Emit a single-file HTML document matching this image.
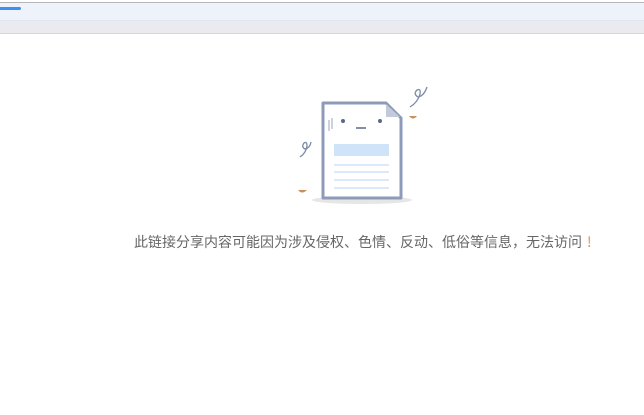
<!DOCTYPE html>
<html><head><meta charset="utf-8"><style>
html,body{margin:0;padding:0;width:644px;height:415px;background:#fff;overflow:hidden;position:relative}
.a{position:absolute}
</style></head><body>
<div class="a" style="left:0;top:2px;width:644px;height:1px;background:#b5b5ba"></div>
<div class="a" style="left:0;top:3px;width:644px;height:17px;background:#eef3fb"></div>
<div class="a" style="left:0;top:7px;width:21px;height:3px;background:#3d8ef5;border-radius:0 2px 2px 0"></div>
<div class="a" style="left:0;top:20px;width:644px;height:13px;background:#ebeaef;border-top:1px solid #dde6f2"></div>
<div class="a" style="left:0;top:33px;width:644px;height:1px;background:#c8d9f0"></div>
<svg class="a" style="left:290px;top:80px" width="150" height="130" viewBox="0 0 150 130">
<ellipse cx="72" cy="120" rx="50" ry="4" fill="#e6e6e6"/>
<path d="M33 23 L96 23 L111 38 L111 118 L33 118 Z" fill="#fff" stroke="#8e9bb8" stroke-width="3" stroke-linejoin="round"/>
<path d="M96 24 L96 37 L110 37 Z" fill="#c2cad9"/>
<line x1="39" y1="40" x2="39" y2="51" stroke="#9aa6c0" stroke-width="1"/>
<line x1="42" y1="38" x2="42" y2="49" stroke="#9aa6c0" stroke-width="1"/>
<circle cx="53" cy="41" r="2" fill="#5a6888"/>
<circle cx="90" cy="41" r="2" fill="#5a6888"/>
<line x1="66" y1="48" x2="76" y2="48" stroke="#5a6888" stroke-width="1.5"/>
<rect x="44" y="64" width="55" height="12" fill="#cfe3f9"/>
<g stroke="#c6dcf4" stroke-width="1.3"><line x1="44" y1="85" x2="99" y2="85"/><line x1="44" y1="92" x2="99" y2="92"/><line x1="44" y1="100" x2="99" y2="100"/><line x1="44" y1="108" x2="99" y2="108"/></g>
<path d="M120 27 Q128 22 130 14 Q131 8 127 10 Q123 14 128 17 Q134 16 137 7" fill="none" stroke="#7d8aa8" stroke-width="1.3"/>
<path d="M10 77 Q16 73 17 66 Q17 61 14 63 Q11 67 15 69 Q20 68 21 62" fill="none" stroke="#7d8aa8" stroke-width="1.3"/>
<path d="M119 36 Q123 41 127 36 Z" fill="#c9905a"/>
<path d="M8 110 Q12 115 17 110 Z" fill="#c9905a"/>
</svg>
<div class="a" style="left:134px;top:232px;font:14px 'Noto Sans CJK SC',sans-serif;color:#666;white-space:nowrap">此链接分享内容可能因为涉及侵权、色情、反动、低俗等信息，无法访问</div>
<div class="a" style="left:587px;top:232px;font:14px 'Noto Sans CJK SC',sans-serif;color:#e58a4d">!</div>
</body></html>
